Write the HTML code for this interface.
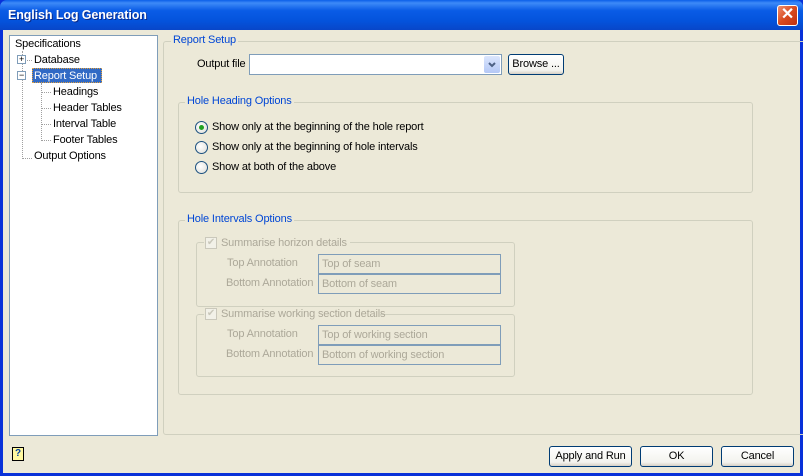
<!DOCTYPE html>
<html><head><style>
*{box-sizing:border-box;margin:0;padding:0}
body{width:803px;height:476px;overflow:hidden;background:#0831d9;font-family:Tahoma,"Liberation Sans",sans-serif;font-size:11px;letter-spacing:-0.15px;color:#000;position:relative}
.abs{position:absolute}
#title{left:0;top:0;width:803px;height:30px;background:linear-gradient(#0a5fe8 0%,#3d8af7 10%,#0a5ce6 35%,#0453dc 70%,#0846c8 100%);border-radius:7px 7px 0 0}
#title span{position:absolute;left:8px;top:8px;color:#fff;font-weight:bold;font-size:12.5px;letter-spacing:-0.1px;text-shadow:1px 1px 0 #0a2a8a}
#close{left:777px;top:5px;width:21px;height:21px;background:linear-gradient(135deg,#f09070,#d84a1e 50%,#c03010);border:1px solid #fff;border-radius:3px;color:#fff;font-weight:bold;font-size:16px;line-height:18px;text-align:center}
#client{left:3px;top:30px;width:797px;height:443px;background:#ece9d8}
.gb{position:absolute;border:1px solid #d0d0bf;border-radius:3px}
.gt{position:absolute;background:#ece9d8;color:#0046d5;padding:0 2px;top:-8px;left:6px;white-space:nowrap}
.dis{color:#aca899}
.inp{position:absolute;background:#ece9d8;border:1px solid #7f9db9;color:#aca899;padding:3px 3px;height:20px}
.radio{position:absolute;width:13px;height:13px;border:1px solid #1c5180;border-radius:50%;background:radial-gradient(circle at 40% 40%,#fff,#dcdcd6)}
.btn{position:absolute;border:1px solid #003c74;border-radius:3px;background:linear-gradient(#fff,#f3f3ee 80%,#d6d0c5);text-align:center;line-height:19px;height:21px}
.t{position:absolute;white-space:nowrap}
.dot{position:absolute;border-color:#a0a0a0;border-style:dotted;border-width:0}
</style></head><body>
<div id="title" class="abs"><span>English Log Generation</span></div>
<div id="close" class="abs">✕</div>
<div id="client" class="abs">
 <div class="abs" style="left:6px;top:5px;width:149px;height:401px;background:#fff;border:1px solid #7f9db9"></div>
</div>
<div class="t" style="left:15px;top:38px">Specifications</div>
<div class="dot" style="left:22px;top:51px;height:108px;border-left-width:1px"></div>
<div class="dot" style="left:22px;top:158px;width:10px;border-top-width:1px"></div>
<div class="dot" style="left:22px;top:60px;width:10px;border-top-width:1px"></div>
<div class="abs" style="left:17px;top:55px;width:9px;height:9px;border:1px solid #7f9db9;background:#fff;font-size:9px;line-height:7px;text-align:center">+</div>
<div class="t" style="left:34px;top:54px">Database</div>
<div class="abs" style="left:17px;top:71px;width:9px;height:9px;border:1px solid #7f9db9;background:#fff;font-size:9px;line-height:6px;text-align:center">−</div>
<div class="abs" style="left:32px;top:68px;width:70px;height:15px;background:#316ac5;border:1px dotted #e0a040"></div>
<div class="t" style="left:34px;top:70px;color:#fff">Report Setup</div>
<div class="dot" style="left:41px;top:83px;height:58px;border-left-width:1px"></div>
<div class="dot" style="left:41px;top:92px;width:10px;border-top-width:1px"></div>
<div class="dot" style="left:41px;top:108px;width:10px;border-top-width:1px"></div>
<div class="dot" style="left:41px;top:124px;width:10px;border-top-width:1px"></div>
<div class="dot" style="left:41px;top:140px;width:10px;border-top-width:1px"></div>
<div class="t" style="left:53px;top:86px">Headings</div>
<div class="t" style="left:53px;top:102px">Header Tables</div>
<div class="t" style="left:53px;top:118px">Interval Table</div>
<div class="t" style="left:53px;top:134px">Footer Tables</div>
<div class="t" style="left:34px;top:150px">Output Options</div>

<div class="gb" style="left:163px;top:41px;width:660px;height:394px"><div class="gt" style="top:-8px;left:7px">Report Setup</div></div>
<div class="t" style="left:197px;top:58px">Output file</div>
<div class="abs" style="left:249px;top:54px;width:253px;height:21px;background:#fff;border:1px solid #7f9db9"></div>
<div class="abs" style="left:484px;top:56px;width:16px;height:17px;background:linear-gradient(#dbe6fd,#b4c8f6);border-radius:2px">
<svg width="16" height="17"><path d="M5 7l3 3 3-3" stroke="#4d6185" stroke-width="2" fill="none"/></svg></div>
<div class="btn" style="left:508px;top:54px;width:56px">Browse ...</div>

<div class="gb" style="left:178px;top:102px;width:575px;height:91px"><div class="gt">Hole Heading Options</div></div>
<div class="radio" style="left:195px;top:121px"><div class="abs" style="left:3px;top:3px;width:5px;height:5px;border-radius:50%;background:#21a121"></div></div>
<div class="t" style="left:212px;top:121px">Show only at the beginning of the hole report</div>
<div class="radio" style="left:195px;top:141px"></div>
<div class="t" style="left:212px;top:141px">Show only at the beginning of hole intervals</div>
<div class="radio" style="left:195px;top:161px"></div>
<div class="t" style="left:212px;top:161px">Show at both of the above</div>

<div class="gb" style="left:178px;top:220px;width:575px;height:175px"><div class="gt">Hole Intervals Options</div></div>
<div class="gb" style="left:196px;top:242px;width:319px;height:65px"></div>
<div class="abs" style="left:204px;top:237px;width:146px;height:13px;background:#ece9d8"></div>
<div class="abs" style="left:205px;top:237px;width:12px;height:12px;border:1px solid #cac8bb;background:#f2f1e8;color:#cac8bb;font-size:10px;line-height:10px;text-align:center">✔</div>
<div class="t dis" style="left:221px;top:237px">Summarise horizon details</div>
<div class="t dis" style="left:227px;top:257px">Top Annotation</div>
<div class="inp" style="left:318px;top:254px;width:183px">Top of seam</div>
<div class="t dis" style="left:226px;top:277px">Bottom Annotation</div>
<div class="inp" style="left:318px;top:274px;width:183px">Bottom of seam</div>

<div class="gb" style="left:196px;top:314px;width:319px;height:63px"></div>
<div class="abs" style="left:204px;top:308px;width:176px;height:13px;background:#ece9d8"></div>
<div class="abs" style="left:205px;top:308px;width:12px;height:12px;border:1px solid #cac8bb;background:#f2f1e8;color:#cac8bb;font-size:10px;line-height:10px;text-align:center">✔</div>
<div class="t dis" style="left:221px;top:308px">Summarise working section details</div>
<div class="t dis" style="left:227px;top:328px">Top Annotation</div>
<div class="inp" style="left:318px;top:325px;width:183px">Top of working section</div>
<div class="t dis" style="left:226px;top:348px">Bottom Annotation</div>
<div class="inp" style="left:318px;top:345px;width:183px">Bottom of working section</div>

<div class="abs" style="left:12px;top:447px;width:12px;height:14px;border:1px solid #000;background:#fff8a0;font-size:10px;font-weight:bold;line-height:12px;text-align:center;color:#0040a0">?</div>
<div class="btn" style="left:549px;top:446px;width:83px">Apply and Run</div>
<div class="btn" style="left:640px;top:446px;width:73px">OK</div>
<div class="btn" style="left:721px;top:446px;width:73px">Cancel</div>
</body></html>
